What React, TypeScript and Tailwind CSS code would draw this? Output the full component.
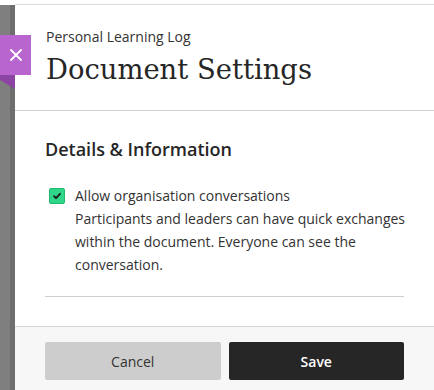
export default function App() {
  return (
    <div
      className="relative flex h-[390px] w-[434px] overflow-hidden bg-white text-[#333]"
      style={{ fontFamily: '"Open Sans", "Noto Sans", sans-serif' }}
    >
      {/* left rail */}
      <div className="mt-[5px] flex w-[15px] shrink-0">
        <div className="w-[10px] bg-[#7f7f7f]" />
        <div className="w-[5px] bg-[#6e6e6e]" />
      </div>

      {/* close tab */}
      <button className="absolute left-0 top-[35px] flex h-[40px] w-[31px] items-center justify-center bg-[#b865cf] text-white">
        <svg width="14" height="14" viewBox="0 0 14 14" fill="none" stroke="currentColor" strokeWidth="1.8" strokeLinecap="round">
          <path d="M2 2L12 12M12 2L2 12" />
        </svg>
      </button>
      <svg className="absolute left-0 top-[75px]" width="15" height="14" viewBox="0 0 15 14">
        <polygon points="0,0 15,0 15,14 0,5" fill="#8c45a3" />
      </svg>

      {/* panel */}
      <div className="mt-[4px] flex flex-1 flex-col border-t border-[#dcdcdc]">
        <div className="border-b border-[#cfcfcf] px-[31px] pb-[21px] pt-[22px]">
          <p className="text-[14px] leading-[20px] text-[#333]">Personal Learning Log</p>
          <h1
            className="mt-[4px] text-[27.4px] leading-[38px] text-[#262626]"
            style={{ fontFamily: '"DejaVu Serif", "Liberation Serif", serif' }}
          >
            Document Settings
          </h1>
        </div>

        <div className="flex-1 px-[30px] pt-[25px]">
          <h2 className="text-[18px] font-semibold leading-[26px] text-[#262626]">Details &amp; Information</h2>

          <div className="mt-[22px] flex gap-[10px] border-b border-[#cfcfcf] pb-[20px]">
            <span className="ml-[4px] mt-[4px] flex h-[16px] w-[16px] shrink-0 items-center justify-center rounded-[2px] border border-[#1fb86c] bg-[#2fd68a]">
              <svg width="10" height="10" viewBox="0 0 10 10" fill="none" stroke="#1a1a1a" strokeWidth="1.8" strokeLinecap="round" strokeLinejoin="round">
                <path d="M2 5.2L4 7.2L8 2.8" />
              </svg>
            </span>
            <div className="-mr-[12px] text-[14px] leading-[23px] text-[#333]">
              <p>Allow organisation conversations</p>
              <p>
                Participants and leaders can have quick exchanges within the document. Everyone can see the
                conversation.
              </p>
            </div>
          </div>
        </div>

        <div className="flex gap-[8px] border-t border-[#d6d6d6] bg-[#f7f7f7] px-[30px] pb-[10px] pt-[15px]">
          <button className="h-[38px] flex-1 rounded-[2px] bg-[#cdcdcd] text-[14px] text-[#333]">Cancel</button>
          <button className="h-[38px] flex-1 rounded-[2px] bg-[#262626] text-[14px] font-semibold text-white">Save</button>
        </div>
      </div>
    </div>
  );
}
